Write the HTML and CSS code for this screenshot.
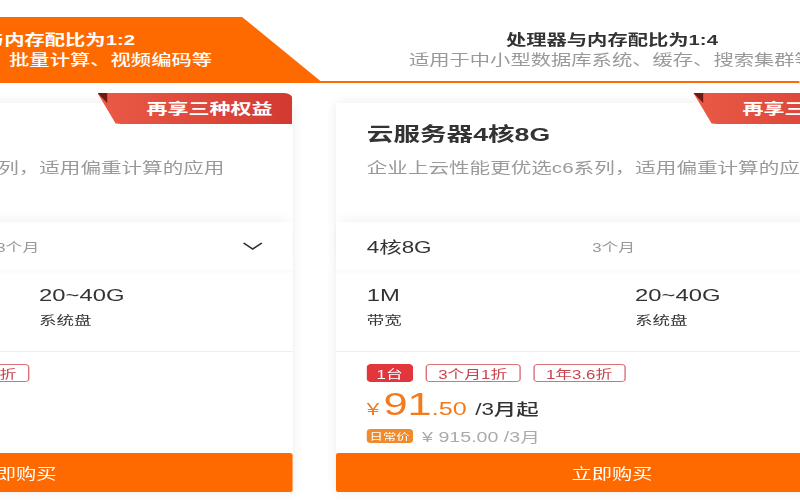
FILE: index.html
```html
<!DOCTYPE html>
<html lang="zh-CN">
<head>
<meta charset="utf-8">
<title>云服务器</title>
<link rel="stylesheet" href="styles.css">
</head>
<body>
<div class="stage">
  <div class="tabs">
    <div class="tab tab-active">
      <div class="tab-title">处理器与内存配比为1:2</div>
      <div class="tab-sub">适用于Web前端、批量计算、视频编码等</div>
    </div>
    <div class="tab">
      <div class="tab-title">处理器与内存配比为1:4</div>
      <div class="tab-sub">适用于中小型数据库系统、缓存、搜索集群等</div>
    </div>
  </div>
  <div class="cards">
    <div class="card">
      <div class="badge">再享三种权益</div>
      <div class="card-head">
        <div class="card-title">云服务器2核4G</div>
        <div class="card-desc">企业上云性能更优选c6系列，适用偏重计算的应用</div>
      </div>
      <div class="select-row">
        <span class="sel-spec">2核4G</span>
        <span class="sel-dur">3个月</span>
        <svg class="chev" viewBox="0 0 15 8" width="15" height="8"><polyline points="1,1 7.5,7 14,1" fill="none" stroke="#333" stroke-width="1.4"/></svg>
      </div>
      <div class="specs">
        <div class="spec"><div class="spec-val">1M</div><div class="spec-lab">带宽</div></div>
        <div class="spec"><div class="spec-val">20~40G</div><div class="spec-lab">系统盘</div></div>
      </div>
      <div class="price-box">
        <div class="tags"><span class="tag tag-fill">1台</span><span class="tag">3个月1折</span><span class="tag">1年3.6折</span></div>
        <div class="price"><span class="yen">¥</span><span class="int">45</span><span class="dec">.75</span><span class="unit">/3月起</span></div>
        <div class="orig"><span class="orig-badge">日常价</span><span class="orig-price">¥ 457.50 /3月</span></div>
      </div>
      <button class="buy">立即购买</button>
    </div>
    <div class="card">
      <div class="badge">再享三种权益</div>
      <div class="card-head">
        <div class="card-title">云服务器4核8G</div>
        <div class="card-desc">企业上云性能更优选c6系列，适用偏重计算的应用</div>
      </div>
      <div class="select-row">
        <span class="sel-spec">4核8G</span>
        <span class="sel-dur">3个月</span>
        <svg class="chev" viewBox="0 0 15 8" width="15" height="8"><polyline points="1,1 7.5,7 14,1" fill="none" stroke="#333" stroke-width="1.4"/></svg>
      </div>
      <div class="specs">
        <div class="spec"><div class="spec-val">1M</div><div class="spec-lab">带宽</div></div>
        <div class="spec"><div class="spec-val">20~40G</div><div class="spec-lab">系统盘</div></div>
      </div>
      <div class="price-box">
        <div class="tags"><span class="tag tag-fill">1台</span><span class="tag">3个月1折</span><span class="tag">1年3.6折</span></div>
        <div class="price"><span class="yen">¥</span><span class="int">91</span><span class="dec">.50</span><span class="unit">/3月起</span></div>
        <div class="orig"><span class="orig-badge">日常价</span><span class="orig-price">¥ 915.00 /3月</span></div>
      </div>
      <button class="buy">立即购买</button>
    </div>
  </div>
</div>
</body>
</html>
```
FILE: styles.css
```css
html, body {
  margin: 0;
  padding: 0;
  width: 800px;
  height: 500px;
  overflow: hidden;
  background: #fff;
}

.stage {
  width: 571.43px;
  height: 500px;
  box-sizing: border-box;
  padding-top: 17px;
  transform: scaleX(1.4);
  transform-origin: 0 0;
  font-family: "Liberation Sans", "Noto Sans CJK SC", sans-serif;
  color: #333;
}

/* tabs */
.tabs {
  display: flex;
  margin-left: -187.5px;
  border-bottom: 2px solid #ff6a00;
}

.tab {
  flex: none;
  width: 416.4px;
  height: 64px;
  box-sizing: border-box;
  padding-top: 13px;
  text-align: center;
  white-space: nowrap;
}

.tab-active {
  background: #ff6a00;
  clip-path: polygon(0 0, calc(100% - 56px) 0, 100% 100%, 0 100%);
}

.tab-title {
  font-size: 14.5px;
  line-height: 20px;
  font-weight: 700;
  color: #333;
}

.tab-sub {
  font-size: 14.5px;
  line-height: 20px;
  color: #999;
}

.tab-active .tab-title,
.tab-active .tab-sub {
  color: #fff;
}

.tab-active .tab-sub {
  font-weight: 500;
}

/* cards */
.cards {
  display: flex;
  gap: 31.4px;
  margin-left: -185.7px;
  margin-top: 20px;
}

.card {
  flex: none;
  width: 394.3px;
  position: relative;
  background: #fff;
  box-shadow: 0 0 10px rgba(0, 0, 0, 0.08);
  white-space: nowrap;
}

.badge {
  position: absolute;
  top: -10px;
  right: 0;
  width: 139px;
  height: 31px;
  box-sizing: border-box;
  padding-right: 14px;
  text-align: right;
  line-height: 31px;
  font-size: 15px;
  font-weight: 700;
  color: #fff;
  background: linear-gradient(90deg, #ea5a46, #d23a31);
  border-radius: 0 6px 0 0;
  clip-path: polygon(0 0, 100% 0, 100% 100%, 17px 100%, 13px 98%);
}

.badge::before {
  content: "";
  position: absolute;
  left: 0;
  top: 0;
  width: 8px;
  height: 10px;
  background: #6a1c14;
  clip-path: polygon(0 0, 7px 0, 7px 10px);
}

.card-head {
  padding: 20px 22px 44px;
}

.card-title {
  font-size: 19px;
  line-height: 24px;
  font-weight: 600;
  color: #333;
}

.card-desc {
  margin-top: 11px;
  font-size: 14.7px;
  line-height: 20px;
  color: #999;
}

.select-row {
  display: flex;
  align-items: center;
  height: 48px;
  padding: 0 20.7px 0 22px;
  background: #fff;
  box-shadow: 0 -6px 10px -3px rgba(0, 0, 0, 0.05), 0 2px 4px rgba(0, 0, 0, 0.03);
}

.sel-spec {
  flex: none;
  width: 161px;
  font-size: 16px;
  color: #333;
}

.sel-dur {
  flex: 1;
  font-size: 12px;
  color: #999;
}

.chev {
  flex: none;
  display: block;
}

.specs {
  display: grid;
  grid-template-columns: 191.6px 1fr;
  padding: 15px 22px 21px;
  border-bottom: 1px solid #eee;
}

.spec-val {
  font-size: 17px;
  line-height: 22px;
  color: #333;
}

.spec-lab {
  margin-top: 5px;
  font-size: 12.5px;
  line-height: 18px;
  color: #333;
}

.price-box {
  padding: 12px 22px 0;
}

.tags {
  display: flex;
  gap: 9px;
}

.tag {
  display: inline-flex;
  align-items: center;
  height: 18px;
  box-sizing: border-box;
  padding: 0 8.3px;
  border: 1px solid #dc7079;
  border-radius: 3px;
  font-size: 12px;
  color: #c8434e;
}

.tag-fill {
  padding: 0 6px;
  background: #e2363d;
  border-color: #e2363d;
  color: #fff;
}

.price {
  display: flex;
  align-items: baseline;
  height: 32px;
  margin-top: 7px;
  color: #f37b1d;
}

.yen {
  font-size: 16px;
  line-height: 1;
  margin-right: 3px;
}

.int {
  font-size: 31px;
  line-height: 1;
}

.dec {
  font-size: 18px;
  line-height: 1;
}

.unit {
  margin-left: 6px;
  font-size: 16px;
  line-height: 1;
  font-weight: 500;
  color: #333;
}

.orig {
  display: flex;
  align-items: center;
  height: 14px;
  margin-top: 8px;
}

.orig-badge {
  display: inline-flex;
  align-items: center;
  height: 14px;
  padding: 0 2px;
  border-radius: 3px;
  background: #f08a2a;
  color: #fff;
  font-size: 9.5px;
}

.orig-price {
  margin-left: 7px;
  font-size: 14px;
  color: #aaa;
}

.buy {
  display: block;
  width: 100%;
  height: 39px;
  margin-top: 10px;
  border: none;
  border-radius: 2px;
  background: #ff6a00;
  color: #fff;
  font-family: "Liberation Sans", "Noto Sans CJK SC", sans-serif;
  font-size: 14.5px;
  padding: 0;
}
```
